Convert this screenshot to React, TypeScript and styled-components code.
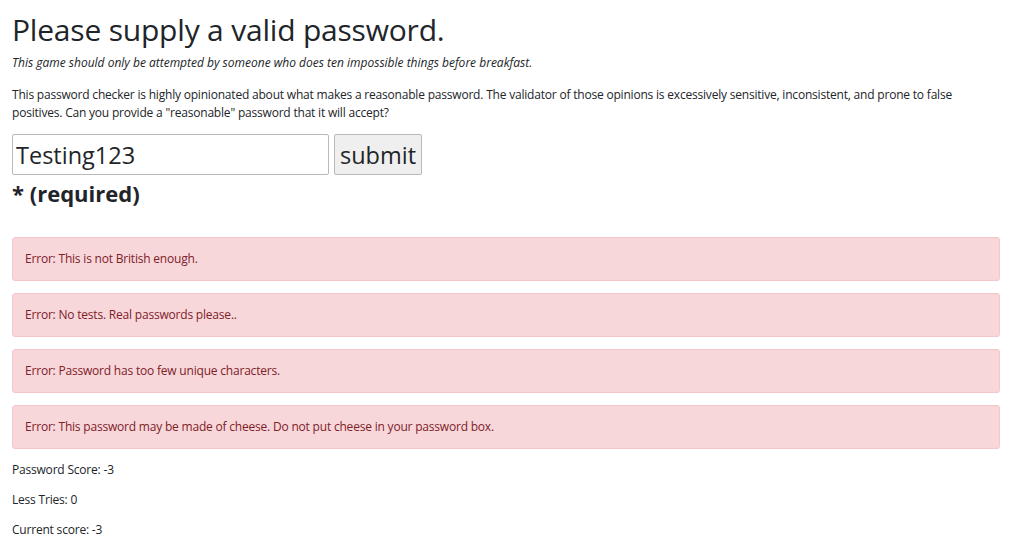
import React from 'react';
import styled, { createGlobalStyle } from 'styled-components';

const GlobalStyle = createGlobalStyle`
  html, body {
    margin: 0;
    padding: 0;
    background: #fff;
  }
  body {
    font-family: 'Open Sans', 'Noto Sans', sans-serif;
    font-size: 12px;
    line-height: 18px;
    letter-spacing: -0.2px;
    color: #212529;
  }
`;

const Page = styled.div`
  padding: 12px 24px 0 12px;
`;

const Title = styled.h1`
  margin: 0 0 6px;
  font-size: 30px;
  line-height: 36px;
  font-weight: 400;
  letter-spacing: -0.2px;
`;

const Tagline = styled.p`
  margin: 0 0 14px;
  font-size: 12px;
  font-style: italic;
  letter-spacing: 0;
`;

const Intro = styled.p`
  margin: 0 0 12px;
`;

const Form = styled.form`
  display: flex;
  align-items: stretch;
  gap: 5px;
`;

const Field = styled.input`
  box-sizing: border-box;
  width: 317px;
  height: 41px;
  padding: 0 3px;
  font-family: inherit;
  font-size: 23.5px;
  letter-spacing: 0;
  color: #212529;
  border: 1px solid #b9b9b9;
  border-radius: 2px;
`;

const Submit = styled.button`
  box-sizing: border-box;
  height: 41px;
  padding: 0 5px;
  font-family: inherit;
  font-size: 23.5px;
  letter-spacing: 0;
  color: #212529;
  background: #efefef;
  border: 1px solid #b9b9b9;
  border-radius: 2px;
`;

const Required = styled.div`
  margin: 2px 0 28px;
  font-size: 22px;
  line-height: 32px;
  font-weight: 700;
  letter-spacing: 0;
`;

const Alert = styled.div`
  box-sizing: border-box;
  height: 44px;
  margin-bottom: 12px;
  padding: 12px 12px;
  background: #f8d7da;
  border: 1px solid #f5c6cb;
  border-radius: 3px;
  color: #7d2129;
`;

const Stat = styled.p`
  margin: 0 0 12px;
`;

const errors = [
  'Error: This is not British enough.',
  'Error: No tests. Real passwords please..',
  'Error: Password has too few unique characters.',
  'Error: This password may be made of cheese. Do not put cheese in your password box.',
];

const stats = ['Password Score: -3', 'Less Tries: 0', 'Current score: -3'];

export default function App() {
  return (
    <Page>
      <GlobalStyle />
      <Title>Please supply a valid password.</Title>
      <Tagline>
        This game should only be attempted by someone who does ten impossible things before breakfast.
      </Tagline>
      <Intro>
        This password checker is highly opinionated about what makes a reasonable password. The validator of
        those opinions is excessively sensitive, inconsistent, and prone to false positives. Can you provide a
        "reasonable" password that it will accept?
      </Intro>
      <Form onSubmit={(e) => e.preventDefault()}>
        <Field defaultValue="Testing123" />
        <Submit type="submit">submit</Submit>
      </Form>
      <Required>* (required)</Required>
      {errors.map((msg) => (
        <Alert key={msg}>{msg}</Alert>
      ))}
      {stats.map((s) => (
        <Stat key={s}>{s}</Stat>
      ))}
    </Page>
  );
}
